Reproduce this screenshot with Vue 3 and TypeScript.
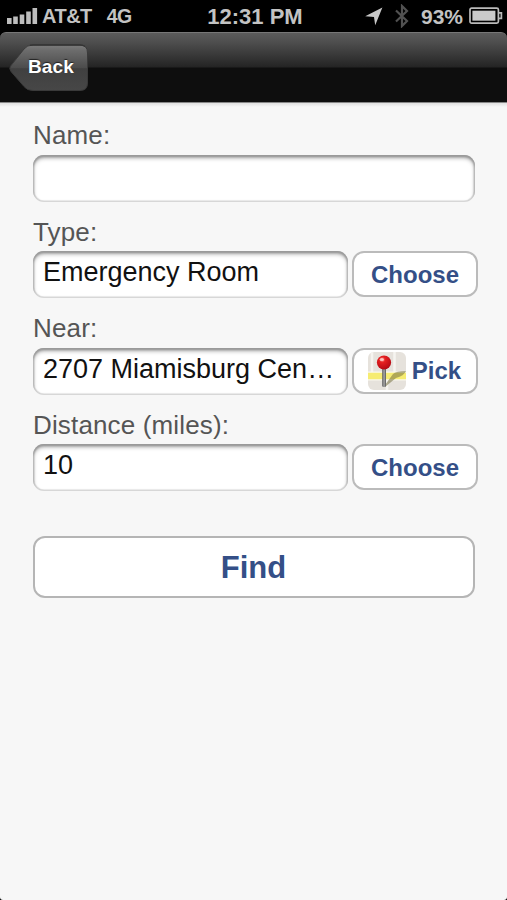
<script setup lang="ts">
import { ref } from 'vue'

interface Field {
  label: string
  value: string
  action?: string
  map?: boolean
}

const fields = ref<Field[]>([
  { label: 'Name:', value: '' },
  { label: 'Type:', value: 'Emergency Room', action: 'Choose' },
  { label: 'Near:', value: '2707 Miamisburg Cen…', action: 'Pick', map: true },
  { label: 'Distance (miles):', value: '10', action: 'Choose' },
])
</script>

<template>
  <div class="screen">
    <header class="status">
      <div class="carrier">
        <svg class="signal" width="31" height="17" viewBox="0 0 31 17">
          <path d="M0 10h4.6v6H0zM6.2 8.5h4.6V16H6.2zM12.7 6.5h4.6V16h-4.6zM19.2 3.5h4.6V16h-4.6zM25.5 0h4.6v16h-4.6z" />
        </svg>
        <span class="name">AT&amp;T</span>
        <span class="network">4G</span>
      </div>
      <div class="clock">12:31 PM</div>
      <div class="indicators">
        <svg class="location" width="18" height="19" viewBox="0 0 18 19">
          <path d="M17.4.4 10.2 18.2 9 10 .2 9.2z" />
        </svg>
        <svg class="bluetooth" width="14" height="24" viewBox="0 0 14 24">
          <path d="M1 6.5 12 17 7 22V2l5 5L1 17.5" />
        </svg>
        <span class="percent">93%</span>
        <svg class="battery" width="34" height="18" viewBox="0 0 34 18">
          <rect class="shell" x="1" y="1.2" width="28.4" height="15" rx="1.6" />
          <rect class="charge" x="3.4" y="3.7" width="23" height="10" />
          <path class="shell" d="M29.8 5.8h2.6v5.6h-2.6" />
        </svg>
      </div>
    </header>

    <nav class="bar">
      <button class="back" type="button">
        <svg class="back-shape" width="82" height="50" viewBox="0 0 82 50">
          <defs>
            <linearGradient id="backFill" x1="0" y1="0" x2="0" y2="1">
              <stop offset="0" stop-color="#7c7c7c" />
              <stop offset=".12" stop-color="#6c6c6c" />
              <stop offset=".5" stop-color="#4c4c4c" />
              <stop offset=".52" stop-color="#404040" />
              <stop offset="1" stop-color="#474747" />
            </linearGradient>
          </defs>
          <path
            d="M25 2H72Q79.5 2 79.5 10V40Q79.5 47.5 72 47.5H25Q19 47.5 16 43.5L3 28.5Q.5 25.5 3 22.5L16 6Q19 2 25 2z"
            fill="url(#backFill)"
            stroke="#3a3a3a"
            stroke-width="1"
          />
          <path d="M22 2.2Q23 2 25 2H72Q75 2 77 3.5" fill="none" stroke="#343434" stroke-width="1.4" />
        </svg>
        <span class="back-text">Back</span>
      </button>
    </nav>

    <main class="form">
      <div v-for="field in fields" :key="field.label" class="field">
        <div class="label">{{ field.label }}</div>
        <div class="row">
          <div class="input" :class="{ wide: !field.action }">{{ field.value }}</div>
          <button v-if="field.action" type="button" class="action">
            <svg v-if="field.map" class="map" width="38" height="38" viewBox="0 0 38 38">
              <defs>
                <clipPath id="tile"><rect width="38" height="38" rx="6" /></clipPath>
                <radialGradient id="pinHead" cx=".38" cy=".3" r=".7">
                  <stop offset="0" stop-color="#ff9a91" />
                  <stop offset=".3" stop-color="#e51f20" />
                  <stop offset="1" stop-color="#b50a14" />
                </radialGradient>
                <linearGradient id="needle">
                  <stop offset="0" stop-color="#555" />
                  <stop offset=".5" stop-color="#aaa" />
                  <stop offset="1" stop-color="#555" />
                </linearGradient>
              </defs>
              <g clip-path="url(#tile)">
                <rect width="38" height="38" fill="#e6e2dc" />
                <path d="M26.5 0V22M19 27V38M4 0V20" fill="none" stroke="#f6f4f0" stroke-width="2.5" />
                <path d="M0 24H38" stroke="#faf8ee" stroke-width="9" />
                <path d="M0 24H38" stroke="#f6ec72" stroke-width="6.5" />
                <path d="M17 33 25 22Q28 19 38 19Q36 24 28 26L17 35z" fill="#77713f" opacity=".55" />
              </g>
              <rect x="14.2" y="15" width="3.8" height="20" rx="1.5" fill="url(#needle)" />
              <circle cx="16" cy="10.5" r="7.1" fill="url(#pinHead)" />
              <ellipse cx="13.8" cy="7.6" rx="2.2" ry="1.5" fill="#ffd5cf" opacity=".8" />
            </svg>
            <span class="action-text">{{ field.action }}</span>
          </button>
        </div>
      </div>
      <button type="button" class="find">Find</button>
    </main>
  </div>
</template>

<style>
body {
  margin: 0;
  background: #000;
}
</style>

<style scoped>
.screen {
  width: 507px;
  height: 900px;
  overflow: hidden;
  display: flex;
  flex-direction: column;
  background: #000;
  font-family: 'Liberation Sans', Arial, sans-serif;
}

button {
  margin: 0;
  padding: 0;
  font-family: inherit;
  font-weight: bold;
}

.status {
  height: 32px;
  display: grid;
  grid-template-columns: 1fr auto 1fr;
  box-sizing: border-box;
  padding: 0 4px 0 7px;
  color: #c3c3c3;
  font-weight: bold;
  line-height: 33px;
  white-space: nowrap;
}

.carrier,
.indicators {
  display: flex;
  align-items: flex-start;
}

.indicators {
  justify-content: flex-end;
}

.signal {
  margin-top: 8px;
  fill: #bdbdbd;
}

.name {
  margin-left: 4px;
  font-size: 20px;
  letter-spacing: -0.5px;
}

.network {
  margin-left: 15px;
  font-size: 19.5px;
  letter-spacing: -0.6px;
}

.clock {
  font-size: 22px;
}

.location {
  margin: 7px 12px 0 0;
  fill: #c8c8c8;
}

.bluetooth {
  margin: 4px 12px 0 0;
  fill: none;
  stroke: #515151;
  stroke-width: 2.2;
}

.percent {
  font-size: 21px;
}

.battery {
  margin: 7px 0 0 6px;
}

.shell {
  fill: none;
  stroke: #bababa;
  stroke-width: 1.7;
}

.charge {
  fill: #c9c9c9;
}

.bar {
  height: 70px;
  box-sizing: border-box;
  padding: 11px 0 0 8px;
  border-radius: 6px 6px 0 0;
  border-top: 1px solid #777;
  background: linear-gradient(#5b5b5b 0, #505050 8px, #242424 34px, #0e0e0e 35px, #0e0e0e 100%);
}

.back {
  position: relative;
  display: block;
  width: 82px;
  height: 50px;
  border: 0;
  background: none;
  color: #fff;
  font-size: 19px;
  line-height: 46px;
  letter-spacing: 0.1px;
  text-align: left;
}

.back-shape {
  position: absolute;
  left: 0;
  top: -1px;
}

.back-text {
  position: relative;
  display: block;
  height: 50px;
  padding-left: 20px;
  text-shadow: 0 -1px 1px #222;
}

.form {
  flex: 1;
  box-sizing: border-box;
  padding: 17px 28px 0 33px;
  border-radius: 0 0 3px 3px;
  background: linear-gradient(#888 0, #888 1px, #e0e0e0 1px, #f7f7f7 5px);
}

.field {
  height: 96.67px;
}

.label {
  height: 35.5px;
  color: #555;
  font-size: 26px;
  line-height: 32px;
  letter-spacing: 0.15px;
}

.row {
  display: flex;
  gap: 4px;
}

.input {
  width: 315px;
  height: 47px;
  box-sizing: border-box;
  padding-left: 10px;
  border-radius: 11px;
  background: #fff;
  box-shadow:
    inset 0 2px 2px #999,
    inset 0 3px 4px #aaa,
    inset 0 0 1px 1.5px #d8d8d8;
  color: #111;
  font-size: 27px;
  line-height: 42px;
  white-space: nowrap;
}

.wide {
  width: 442px;
}

.action {
  width: 126px;
  height: 46px;
  display: flex;
  align-items: center;
  justify-content: center;
  gap: 6px;
  box-sizing: border-box;
  border: 2px solid #bbb;
  border-radius: 12px;
  background: #fff;
  color: #344f87;
  font-size: 24px;
  line-height: 42px;
}

.action-text {
  padding-top: 1px;
}

.map {
  margin-left: -1px;
}

.find {
  display: block;
  width: 442px;
  height: 62px;
  margin-top: 30px;
  padding: 2px 1px 0 0;
  border: 2px solid #b5b5b5;
  border-radius: 12px;
  background: #fff;
  color: #344f87;
  font-size: 31px;
  line-height: 56px;
}
</style>
